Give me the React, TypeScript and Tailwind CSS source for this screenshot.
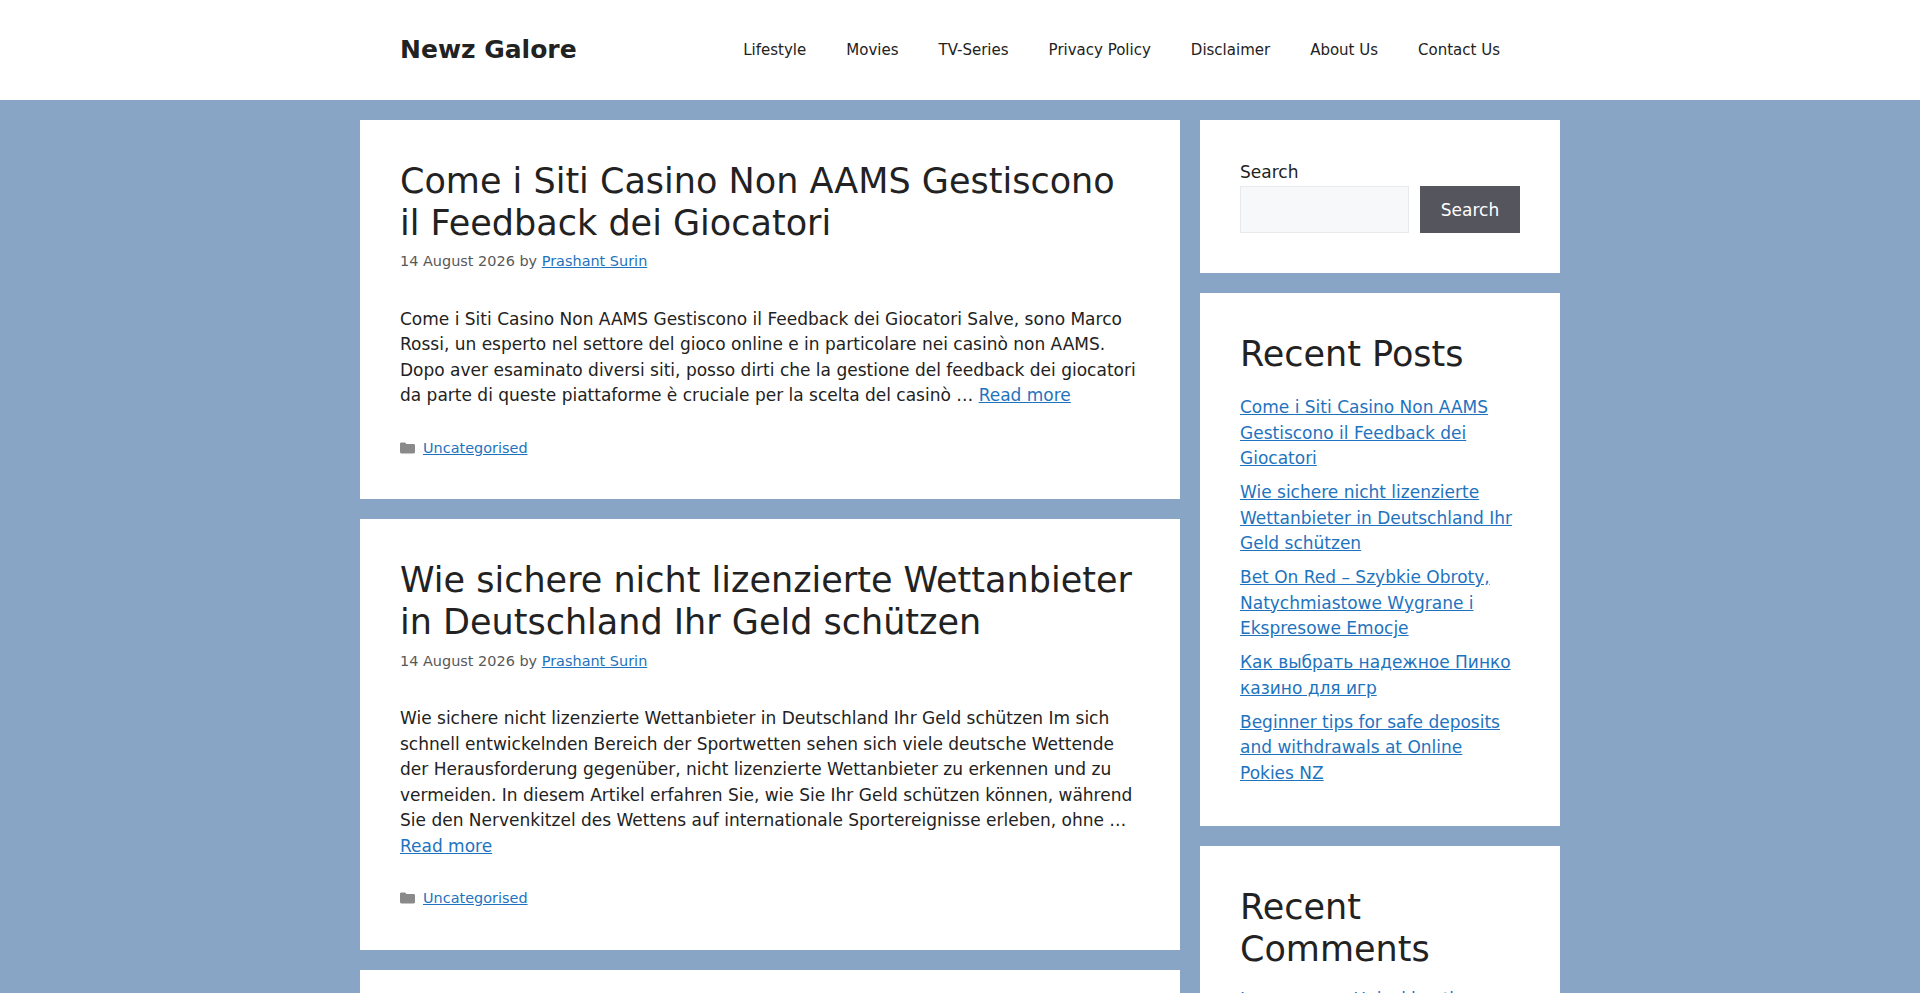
import React from 'react';

const navItems = ['Lifestyle', 'Movies', 'TV-Series', 'Privacy Policy', 'Disclaimer', 'About Us', 'Contact Us'];

const posts = [
  {
    title: 'Come i Siti Casino Non AAMS Gestiscono il Feedback dei Giocatori',
    excerpt:
      'Come i Siti Casino Non AAMS Gestiscono il Feedback dei Giocatori Salve, sono Marco Rossi, un esperto nel settore del gioco online e in particolare nei casinò non AAMS. Dopo aver esaminato diversi siti, posso dirti che la gestione del feedback dei giocatori da parte di queste piattaforme è cruciale per la scelta del casinò …',
  },
  {
    title: 'Wie sichere nicht lizenzierte Wettanbieter in Deutschland Ihr Geld schützen',
    excerpt:
      'Wie sichere nicht lizenzierte Wettanbieter in Deutschland Ihr Geld schützen Im sich schnell entwickelnden Bereich der Sportwetten sehen sich viele deutsche Wettende der Herausforderung gegenüber, nicht lizenzierte Wettanbieter zu erkennen und zu vermeiden. In diesem Artikel erfahren Sie, wie Sie Ihr Geld schützen können, während Sie den Nervenkitzel des Wettens auf internationale Sportereignisse erleben, ohne …',
  },
];

const recentPosts = [
  'Come i Siti Casino Non AAMS Gestiscono il Feedback dei Giocatori',
  'Wie sichere nicht lizenzierte Wettanbieter in Deutschland Ihr Geld schützen',
  'Bet On Red – Szybkie Obroty, Natychmiastowe Wygrane i Ekspresowe Emocje',
  'Как выбрать надежное Пинко казино для игр',
  'Beginner tips for safe deposits and withdrawals at Online Pokies NZ',
];

function FolderIcon() {
  return (
    <svg className="mb-[2px] h-[14px] w-[15px] shrink-0 fill-[#8a8a8a]" viewBox="0 0 15 14" aria-hidden="true">
      <path d="M0 3c0-.8.6-1.4 1.4-1.4h3.7l1.3 1.3h7.2c.8 0 1.4.6 1.4 1.4v6.7c0 .8-.6 1.4-1.4 1.4H1.4C.6 12.4 0 11.8 0 11z" />
    </svg>
  );
}

function PostCard({ title, excerpt }: { title: string; excerpt: string }) {
  return (
    <article className="bg-white p-10">
      <h2 className="text-[35px] leading-[42px] text-[#222222]">{title}</h2>
      <div className="mt-[7.225px] text-[14.45px] leading-[21.675px] text-[#595959]">
        14 August 2026 by{' '}
        <a href="#" className="text-[#1e73be] underline">
          Prashant Surin
        </a>
      </div>
      <p className="mt-[34px] text-[17px] leading-[25.5px] text-[#222222]">
        {excerpt}{' '}
        <a href="#" className="text-[#1e73be] underline">
          Read more
        </a>
      </p>
      <footer className="mt-[28.9px] flex items-center gap-[8px] text-[14.45px] leading-[21.675px]">
        <FolderIcon />
        <a href="#" className="text-[#1e73be] underline">
          Uncategorised
        </a>
      </footer>
    </article>
  );
}

export default function App() {
  return (
    <div className="h-[993px] overflow-hidden bg-[#88a5c5] font-['DejaVu_Sans',sans-serif] text-[17px] text-[#222222]">
      <header className="bg-white">
        <div className="mx-auto flex h-[100px] w-[1200px] items-center justify-between px-10">
          <a href="#" className="text-[25px] leading-[37.5px] font-bold text-[#222222]">
            Newz Galore
          </a>
          <nav className="flex text-[15px] leading-[60px] text-[#222222]">
            {navItems.map((item) => (
              <a key={item} href="#" className="px-5">
                {item}
              </a>
            ))}
          </nav>
        </div>
      </header>

      <div className="mx-auto flex w-[1200px] items-start gap-5 pt-5">
        <main className="flex w-[820px] flex-col gap-5">
          {posts.map((post) => (
            <PostCard key={post.title} title={post.title} excerpt={post.excerpt} />
          ))}
          <article className="h-[40px] bg-white" />
        </main>

        <aside className="flex w-[360px] flex-col gap-5">
          <section className="bg-white p-10">
            <label className="block text-[17px] leading-[25.5px]">Search</label>
            <div className="flex gap-[11px]">
              <input
                type="text"
                aria-label="Search"
                className="h-[47.5px] min-w-0 flex-1 border border-[#e7e9ea] bg-[#f7f8f9] px-[15px]"
              />
              <button type="button" className="h-[47.5px] w-[100px] bg-[#55555e] pt-[2px] text-[17px] text-white">
                Search
              </button>
            </div>
          </section>

          <section className="bg-white p-10">
            <h2 className="text-[35px] leading-[42px] text-[#222222]">Recent Posts</h2>
            <ul className="mt-5 flex flex-col gap-[8.5px] text-[17px] leading-[25.5px]">
              {recentPosts.map((post) => (
                <li key={post}>
                  <a href="#" className="text-[#1e73be] underline">
                    {post}
                  </a>
                </li>
              ))}
            </ul>
          </section>

          <section className="bg-white p-10">
            <h2 className="text-[35px] leading-[42px] text-[#222222]">Recent Comments</h2>
            <ul className="mt-5 text-[17px] leading-[18.7px]">
              <li>
                <a href="#" className="text-[#1e73be] underline">
                  Lawrence
                </a>{' '}
                on{' '}
                <a href="#" className="text-[#1e73be] underline">
                  Unlocking the Excitement
                </a>
              </li>
            </ul>
          </section>
        </aside>
      </div>
    </div>
  );
}
